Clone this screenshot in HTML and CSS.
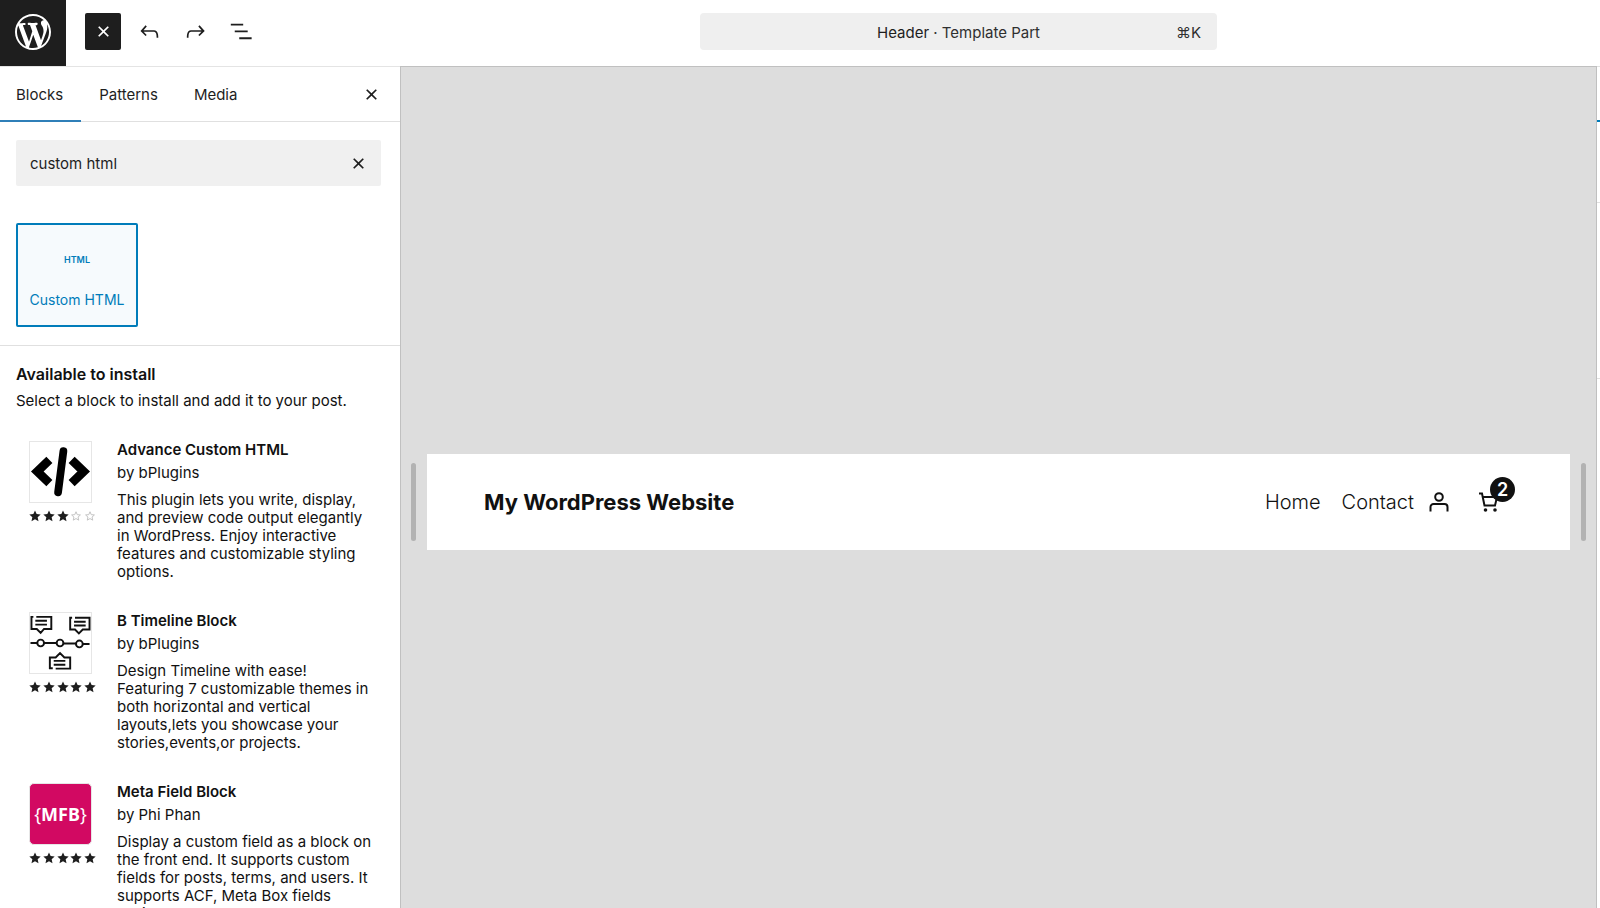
FILE: index.html
```html
<!DOCTYPE html>
<html lang="en">
<head>
<meta charset="utf-8">
<title>Header · Template Part</title>
<link rel="stylesheet" href="styles.css">
</head>
<body>
<svg class="defs" aria-hidden="true">
  <symbol id="close" viewBox="0 0 24 24"><path d="M12 13.06l3.712 3.713 1.061-1.06L13.061 12l3.712-3.712-1.06-1.06L12 10.938 8.288 7.227l-1.061 1.06L10.939 12l-3.712 3.712 1.06 1.061L12 13.061z"/></symbol>
  <symbol id="star" viewBox="0 0 24 24"><path d="M12 1l3.300 7.200 8 .8-6 5.300 1.700 8L12 18.300l-7 4 1.700-8L.7 9l8-.8z"/></symbol>
  <symbol id="star-empty" viewBox="0 0 24 24"><path d="M12 3.500l2.500 5.800 6.300.6-4.700 4.200 1.300 6.200L12 17.100l-5.400 3.200 1.300-6.200-4.700-4.200 6.300-.6z" fill="none" stroke="#c4c4c4" stroke-width="2"/></symbol>
</svg>
<header class="topbar">
  <div class="topbar-tools">
    <a class="site-logo" href="#" aria-label="Open navigation">
      <svg viewBox="0 0 20 20"><path d="M20 10c0-5.510-4.490-10-10-10C4.480 0 0 4.490 0 10c0 5.520 4.480 10 10 10 5.510 0 10-4.480 10-10zM7.780 15.370L4.370 6.220c.55-.02 1.170-.08 1.170-.08.5-.06.44-1.130-.06-1.110 0 0-1.450.11-2.370.11-.18 0-.37 0-.58-.01C4.120 2.690 6.870 1.110 10 1.110c2.330 0 4.450.87 6.050 2.340-.68-.11-1.650.39-1.650 1.580 0 .74.45 1.360.9 2.100.35.61.55 1.360.55 2.460 0 1.490-1.400 5-1.400 5l-3.030-8.370c.54-.02.82-.17.82-.17.5-.05.44-1.250-.06-1.220 0 0-1.440.12-2.380.12-.87 0-2.330-.12-2.330-.12-.5-.03-.56 1.200-.06 1.220l.92.08 1.260 3.410zM17.410 10c.24-.64.74-1.870.43-4.250.7 1.290 1.050 2.710 1.050 4.250 0 3.290-1.730 6.240-4.400 7.780.97-2.590 1.940-5.200 2.920-7.780zM6.100 18.090C3.120 16.650 1.110 13.530 1.110 10c0-1.300.23-2.480.72-3.590C3.250 10.300 4.670 14.200 6.100 18.090zm4.030-6.630l2.580 6.980c-.86.29-1.760.45-2.710.45-.79 0-1.570-.11-2.290-.33.81-2.380 1.620-4.740 2.420-7.100z"/></svg>
    </a>
    <div class="tool-list">
      <button class="tool tool-active" type="button" aria-label="Close block inserter"><svg><use href="#close"/></svg></button>
      <button class="tool" type="button" aria-label="Undo"><svg viewBox="0 0 24 24"><path d="M18.3 11.7c-.6-.6-1.4-.9-2.3-.9H6.700l2.900-3.300-1.100-1-4.500 5L8.500 16l1-1-2.700-2.700H16c.5 0 .9.200 1.300.5 1 1 1 3.400 1 4.500v.3h1.500v-.2c0-1.500 0-4.300-1.500-5.700z"/></svg></button>
      <button class="tool" type="button" aria-label="Redo"><svg viewBox="0 0 24 24"><path d="M15.600 6.500l-1.100 1 2.900 3.300H8c-.9 0-1.700.3-2.300.9-1.400 1.500-1.400 4.200-1.400 5.600v.2h1.500v-.3c0-1.100 0-3.500 1-4.500.3-.3.7-.5 1.300-.5h9.200L14.500 15l1.100 1.100 4.600-4.600-4.600-5z"/></svg></button>
      <button class="tool" type="button" aria-label="Document overview"><svg viewBox="0 0 24 24"><path d="M2.500 5h11v1.700h-11V5Zm3.500 6h11.500v1.700H6V11ZM21 17.200H10v1.700h11v-1.700Z"/></svg></button>
    </div>
  </div>
  <button class="document-bar" type="button">
    <span class="document-title">Header <span class="document-type">· Template Part</span></span>
    <span class="shortcut">⌘K</span>
  </button>
</header>
<div class="editor">
  <aside class="inserter">
    <div class="tabs">
      <div class="tab-list" role="tablist">
        <button class="tab tab-selected" type="button" role="tab" aria-selected="true">Blocks</button>
        <button class="tab" type="button" role="tab" aria-selected="false">Patterns</button>
        <button class="tab" type="button" role="tab" aria-selected="false">Media</button>
      </div>
      <button class="icon-button" type="button" aria-label="Close"><svg><use href="#close"/></svg></button>
    </div>
    <div class="results">
      <div class="search">
        <input class="search-input" type="text" value="custom html" aria-label="Search">
        <button class="icon-button" type="button" aria-label="Reset search"><svg><use href="#close"/></svg></button>
      </div>
      <button class="block-tile" type="button">
        <span class="block-icon">HTML</span>
        <span>Custom HTML</span>
      </button>
    </div>
    <section class="directory">
      <h2 class="directory-title">Available to install</h2>
      <p class="directory-note">Select a block to install and add it to your post.</p>
      <ul class="plugins">
        <li class="plugin">
          <div class="plugin-media">
            <svg class="thumb" viewBox="0 0 62 62"><path class="chevrons" d="M19.500 18.500L7 30.500l12.500 12M42.500 18.500L55 30.500l-12.500 12"/><path class="slash" d="M34 9.500L28.500 52"/></svg>
            <div class="stars" role="img" aria-label="3 out of 5 stars"><svg><use href="#star"/></svg><svg><use href="#star"/></svg><svg><use href="#star"/></svg><svg><use href="#star-empty"/></svg><svg><use href="#star-empty"/></svg></div>
          </div>
          <div class="plugin-text">
            <h3 class="plugin-name">Advance Custom HTML</h3>
            <p class="plugin-author">by bPlugins</p>
            <p class="plugin-about">This plugin lets you write, display, and preview code output elegantly in WordPress. Enjoy interactive features and customizable styling options.</p>
          </div>
        </li>
        <li class="plugin">
          <div class="plugin-media">
            <svg class="thumb line-art" viewBox="0 0 62 62"><path d="M0 31h7M14 31h13M34 31.500h13M54 32h7"/><circle cx="10.500" cy="31" r="3.500"/><circle cx="30.500" cy="31" r="3.500"/><circle cx="50.500" cy="32" r="3.500"/><path d="M3 4H1v12.500h5.500l4 4 3.500-4h7.500V4H6M5 8h12M5 12h12M43 5h-2v12h5l4 4 4-4h7V5H46M45 9h12M45 13h12M23 57h-3V46h6l4.500-4.500L35 46h6v11.500H26M24 49.500h12M24 53.500h12"/></svg>
            <div class="stars" role="img" aria-label="5 out of 5 stars"><svg><use href="#star"/></svg><svg><use href="#star"/></svg><svg><use href="#star"/></svg><svg><use href="#star"/></svg><svg><use href="#star"/></svg></div>
          </div>
          <div class="plugin-text">
            <h3 class="plugin-name">B Timeline Block</h3>
            <p class="plugin-author">by bPlugins</p>
            <p class="plugin-about">Design Timeline with ease! Featuring 7 customizable themes in both horizontal and vertical layouts,lets you showcase your stories,events,or projects.</p>
          </div>
        </li>
        <li class="plugin">
          <div class="plugin-media">
            <div class="thumb thumb-mfb"><span class="brace">{</span><span>MFB</span><span class="brace">}</span></div>
            <div class="stars" role="img" aria-label="5 out of 5 stars"><svg><use href="#star"/></svg><svg><use href="#star"/></svg><svg><use href="#star"/></svg><svg><use href="#star"/></svg><svg><use href="#star"/></svg></div>
          </div>
          <div class="plugin-text">
            <h3 class="plugin-name">Meta Field Block</h3>
            <p class="plugin-author">by Phi Phan</p>
            <p class="plugin-about">Display a custom field as a block on the front end. It supports custom fields for posts, terms, and users. It supports ACF, Meta Box fields available</p>
          </div>
        </li>
      </ul>
    </section>
  </aside>
  <main class="canvas">
    <div class="resize-handle"></div>
    <div class="frame">
      <a class="site-title" href="#">My WordPress Website</a>
      <nav class="site-nav">
        <a class="nav-link" href="#">Home</a>
        <a class="nav-link" href="#">Contact</a>
      </nav>
      <a class="account" href="#" aria-label="Account"><svg viewBox="0 0 20 20"><circle cx="10" cy="5" r="3.800"/><path d="M1.500 19.500V15a3 3 0 0 1 3-3h11a3 3 0 0 1 3 3v4.500"/></svg></a>
      <a class="cart" href="#" aria-label="Cart"><svg viewBox="0 0 20 20"><path class="basket" d="M0 1.500h3l2.500 12H16L18 5H4"/><circle cx="6.500" cy="18" r="1.800"/><circle cx="16" cy="18" r="1.800"/></svg><span class="badge">2</span></a>
    </div>
    <div class="resize-handle"></div>
  </main>
  <aside class="settings" aria-label="Settings">
    <div class="settings-tabs"></div>
    <div class="settings-summary"></div>
    <div class="settings-panel"></div>
  </aside>
</div>
</body>
</html>
```
FILE: styles.css
```css
* { box-sizing: border-box; }
body {
  margin: 0;
  height: 100vh;
  display: flex;
  flex-direction: column;
  overflow: hidden;
  background: #fff;
  color: #1e1e1e;
  font: 15px/18px Inter, "Liberation Sans", sans-serif;
}
h2, h3, p, ul { margin: 0; padding: 0; }
ul { list-style: none; }
a { color: inherit; text-decoration: none; }
button { margin: 0; padding: 0; border: 0; background: none; color: inherit; font: inherit; }
svg { display: block; fill: currentColor; }
.defs { display: none; }

.topbar {
  flex: none;
  display: grid;
  grid-template-columns: 700fr 517fr 383fr;
  height: 66px;
}
.topbar-tools { display: flex; }
.site-logo {
  display: grid;
  place-items: center;
  width: 66px;
  height: 66px;
  padding-bottom: 2px;
  background: #1e1e1e;
  color: #fff;
}
.site-logo svg { width: 36px; height: 36px; }
.tool-list { display: flex; gap: 10px; padding: 13px 0 0 19px; }
.tool { display: grid; place-items: center; width: 36px; height: 37px; border-radius: 2px; }
.tool svg, .icon-button svg { width: 27px; height: 27px; }
.tool-active { background: #1e1e1e; color: #fff; }
.document-bar {
  display: grid;
  grid-template-columns: 1fr auto 1fr;
  align-items: center;
  height: 37px;
  margin-top: 13px;
  padding: 2px 16px 0;
  border-radius: 4px;
  background: #efefef;
}
.document-title { grid-column: 2; }
.document-type { color: #2f2f2f; }
.shortcut { justify-self: end; color: #2f2f2f; }

.editor { flex: 1; min-height: 0; display: flex; }
.inserter { flex: none; width: 400px; overflow: hidden; border-top: 1px solid #e4e4e4; }
.tabs {
  display: flex;
  justify-content: space-between;
  align-items: center;
  padding-right: 15px;
  border-bottom: 1px solid #e0e0e0;
}
.tab-list { display: flex; }
.tab { height: 54px; padding: 2px 18px 0; }
.tab:first-child { padding-left: 16px; }
.tab-selected { box-shadow: 0 1px #2f7fb8, inset 0 -1px #2f7fb8; }
.icon-button { display: grid; place-items: center; }
.results { padding: 18px 19px 18px 16px; border-bottom: 1px solid #e0e0e0; }
.search {
  display: flex;
  align-items: center;
  height: 46px;
  padding: 0 9px 0 14px;
  border-radius: 2px;
  background: #f0f0f0;
}
.search-input {
  flex: 1;
  min-width: 0;
  padding: 2px 0 0;
  border: 0;
  outline: 0;
  background: none;
  color: inherit;
  font: inherit;
}
.block-tile {
  display: flex;
  flex-direction: column;
  align-items: center;
  gap: 22px;
  width: 122px;
  height: 104px;
  margin-top: 37px;
  padding-top: 26px;
  border: 2px solid #007cba;
  border-radius: 2px;
  background: #f6fafd;
  color: #007cba;
  font-size: 14px;
}
.block-icon { font-size: 9px; font-weight: 600; }

.directory { padding: 18px 16px; color: #111; }
.directory-title { font-size: 16px; line-height: 20px; font-weight: 600; }
.directory-note { padding-top: 8px; }
.plugins { display: grid; gap: 31px; padding: 31px 13px 0; }
.plugin { display: grid; grid-template-columns: 67px 1fr; gap: 21px; }
.thumb { width: 63px; height: 62px; border: 1px solid #e6e6e6; background: #fff; }
.chevrons { fill: none; stroke: #000; stroke-width: 9px; }
.slash { stroke: #000; stroke-width: 8px; stroke-linecap: round; }
.line-art { fill: none; stroke: #111; stroke-width: 2px; }
.thumb-mfb {
  display: flex;
  justify-content: center;
  align-items: center;
  border-radius: 5px;
  background: #d20962;
  color: #fff;
  font: 700 18px/24px "Noto Sans", sans-serif;
}
.brace { font-weight: 400; }
.stars { display: flex; justify-content: space-between; padding-top: 7px; color: #1e1e1e; }
.stars svg { flex: none; width: 12px; height: 12px; }
.plugin-name { font-size: 15px; font-weight: 600; }
.plugin-author { padding-top: 5px; }
.plugin-about { padding-top: 9px; }

.canvas {
  flex: 1;
  display: flex;
  align-items: center;
  gap: 11px;
  padding: 29px 10px 0;
  border: 1px solid #c0c0c0;
  border-bottom: 0;
  background: #ddd;
}
.resize-handle { flex: none; width: 5px; height: 78px; border-radius: 3px; background: #b2b2b2; }
.frame {
  flex: 1;
  display: flex;
  align-items: center;
  height: 96px;
  padding: 0 55px 0 57px;
  background: #fff;
  color: #111;
}
.site-title { font-size: 22px; line-height: 32px; font-weight: 700; }
.site-nav { display: flex; gap: 21px; margin-left: auto; }
.nav-link { font-size: 20px; line-height: 28px; font-weight: 300; }
.account { margin-left: 15px; }
.account svg, .cart svg { width: 20px; height: 20px; }
.account svg { fill: none; stroke: #111; stroke-width: 2px; }
.basket { fill: none; stroke: #111; stroke-width: 2px; }
.cart { position: relative; margin-left: 30px; padding-right: 16px; }
.badge {
  position: absolute;
  right: 0;
  bottom: 10px;
  width: 25px;
  height: 25px;
  border-radius: 50%;
  background: #111;
  color: #fff;
  font-size: 18px;
  line-height: 25px;
  font-weight: 600;
  text-align: center;
}

.settings { flex: none; width: 3px; border-top: 1px solid #e0e0e0; }
.settings-tabs { height: 55px; border-bottom: 2px solid #007cba; }
.settings-summary { height: 81px; border-bottom: 1px solid #e0e0e0; }
.settings-panel { height: 176px; border-bottom: 1px solid #e0e0e0; }
```
